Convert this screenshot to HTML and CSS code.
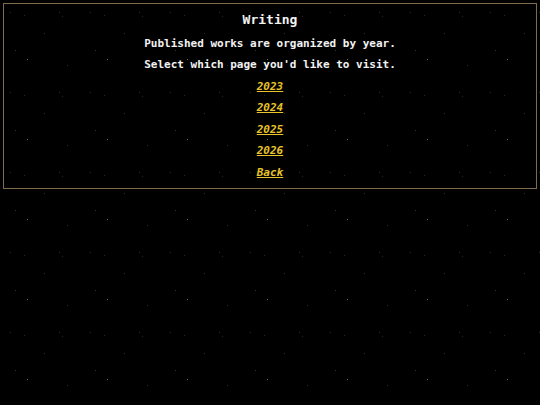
FILE: index.html
```html
<!DOCTYPE html>
<html lang="en">
<head>
  <meta charset="UTF-8">
  <title>Writing</title>
  <link rel="stylesheet" href="styles.css">
</head>
<body>
  <div class="panel">
    <h1 class="title">Writing</h1>
    <p class="line">Published works are organized by year.</p>
    <p class="line">Select which page you'd like to visit.</p>
    <p class="line"><a href="#">2023</a></p>
    <p class="line"><a href="#">2024</a></p>
    <p class="line"><a href="#">2025</a></p>
    <p class="line"><a href="#">2026</a></p>
    <p class="line"><a href="#">Back</a></p>
  </div>
</body>
</html>
```

FILE: styles.css
```css
html {
  background-color: #000;
}
body {
  margin: 0;
  min-height: 405px;
  font-family: "DejaVu Sans Mono", monospace;
  font-weight: bold;
  color: #f2f2f2;
  background-color: #000;
  background-image:
    radial-gradient(circle at 27.5px 59.5px, #6a6a6a 0, #6a6a6a 0.5px, transparent 1px),
    radial-gradient(circle at 15.5px 50.5px, #333 0, #333 0.5px, transparent 1px),
    radial-gradient(circle at 44.5px 33.5px, #2e2e2e 0, #2e2e2e 0.5px, transparent 1px),
    radial-gradient(circle at 67.5px 65.5px, #2c2c2c 0, #2c2c2c 0.5px, transparent 1px),
    radial-gradient(circle at 10.5px 12.5px, #2c2c2c 0, #2c2c2c 0.5px, transparent 1px),
    radial-gradient(circle at 24.5px 15.5px, #262626 0, #262626 0.5px, transparent 1px),
    radial-gradient(circle at 59.5px 12.5px, #2c2c2c 0, #2c2c2c 0.5px, transparent 1px),
    radial-gradient(circle at 62.5px 16.5px, #262626 0, #262626 0.5px, transparent 1px);
  background-size: 80px 80px;
}
.panel {
  margin: 3px;
  border: 1px solid #7d6b4c;
  padding: 7.5px 0 4px;
  text-align: center;
}
.title {
  margin: 0 0 5px;
  font-size: 13px;
  line-height: 16px;
}
.line {
  margin: 0;
  font-size: 11px;
  line-height: 21.6px;
}
.line a {
  color: #e8c32a;
  font-style: italic;
}
```
